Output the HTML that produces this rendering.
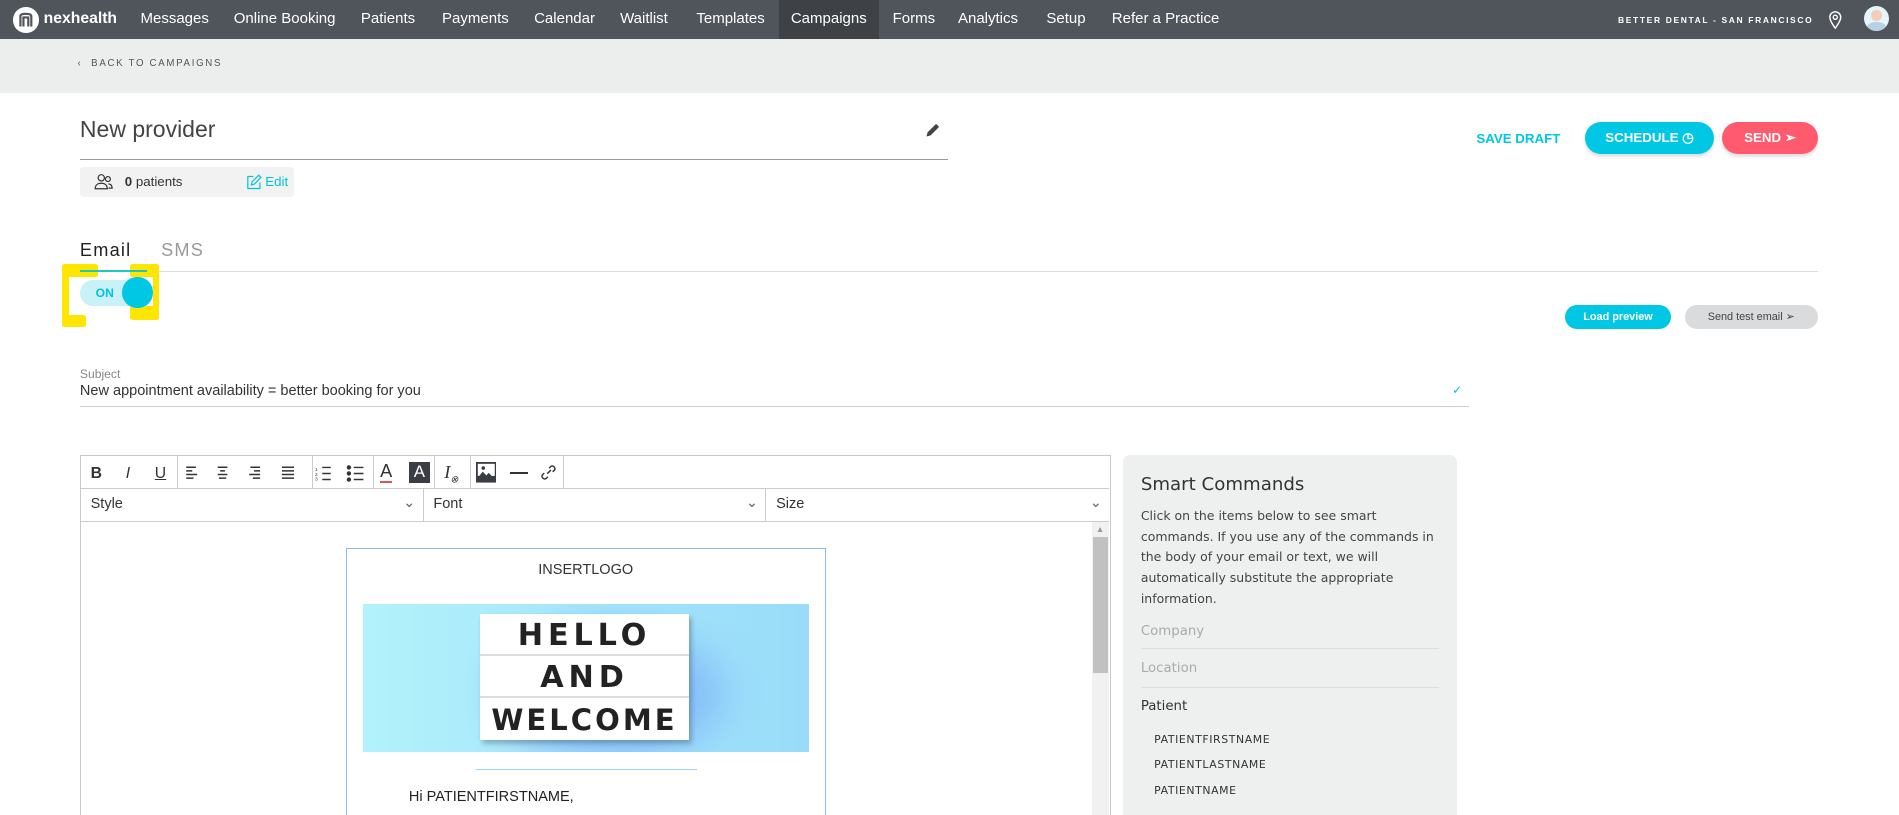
<!DOCTYPE html>
<html><head><meta charset="utf-8">
<style>
*{box-sizing:border-box;margin:0;padding:0}
html,body{width:1899px;height:815px;overflow:hidden;background:#fff}
body{zoom:1.2111;width:1568px;height:673px;position:relative;font-family:"Liberation Sans",sans-serif;color:#333}
.abs{position:absolute}
.nav{left:0;top:0;width:1568px;height:32px;background:#50545b;color:#fff}
.nav span{position:absolute;top:8px;font-size:12.4px;white-space:nowrap}
.band{left:0;top:32px;width:1568px;height:45px;background:#eceeed}
.btn{border-radius:14px;color:#fff;font-weight:bold;font-size:11px;text-align:center}
.tb{position:absolute;top:0;height:27px;border-right:1px solid #ccc}
.ic{position:absolute;top:7px;font-size:13px;color:#333}
.y{position:absolute;background:#ffe600;border-radius:2px}
</style></head><body>
<div class="abs nav">
  <div class="abs" style="left:11px;top:6px;width:21px;height:21px;border-radius:50%;background:#fff"></div>
  <svg class="abs" style="left:15px;top:10px" width="13" height="13" viewBox="0 0 13 13"><path d="M2 12V3.5Q2 1.5 6.5 1.5T11 3.5V12M4.5 12V4.5h4V12" fill="none" stroke="#50545b" stroke-width="1.8"/></svg>
  <span style="left:36px;font-weight:bold;font-size:13px">nexhealth</span>
  <span style="left:116px">Messages</span>
  <span style="left:193px">Online Booking</span>
  <span style="left:298px">Patients</span>
  <span style="left:365px">Payments</span>
  <span style="left:441px">Calendar</span>
  <span style="left:512px">Waitlist</span>
  <span style="left:575px">Templates</span>
  <div class="abs" style="left:643px;top:0;width:83px;height:32px;background:#3e4247"></div>
  <span style="left:653px">Campaigns</span>
  <span style="left:737px">Forms</span>
  <span style="left:791px">Analytics</span>
  <span style="left:864px">Setup</span>
  <span style="left:918px">Refer a Practice</span>
  <span style="left:1336px;top:12px;font-size:7px;font-weight:bold;letter-spacing:1.35px">BETTER DENTAL - SAN FRANCISCO</span>
  <svg class="abs" style="left:1509px;top:8px" width="12" height="16" viewBox="0 0 12 16"><path d="M6 15C3 11 1.5 8.5 1.5 6a4.5 4.5 0 0 1 9 0c0 2.5-1.5 5-4.5 9z" fill="none" stroke="#fff" stroke-width="1.2"/><circle cx="6" cy="6" r="1.7" fill="none" stroke="#fff" stroke-width="1.1"/></svg>
  <div class="abs" style="left:1539px;top:5px;width:21px;height:21px;border-radius:50%;background:#e6f4fb;overflow:hidden">
    <div class="abs" style="left:6px;top:3px;width:9px;height:9px;border-radius:50%;background:#f3cdb5"></div>
    <div class="abs" style="left:2px;top:13px;width:17px;height:12px;border-radius:50%;background:#b9cfe3"></div>
  </div>
</div>
<div class="abs band">
  <span class="abs" style="left:64px;top:16px;font-size:8px;letter-spacing:1.4px;color:#555">‹&nbsp;&nbsp;BACK TO CAMPAIGNS</span>
</div>
<div class="abs" style="left:66px;top:96px;font-size:19px;color:#444;font-weight:300">New provider</div>
<svg class="abs" style="left:763px;top:101px" width="14" height="14" viewBox="0 0 14 14"><path d="M2 12l1-3.5 7-7 2.5 2.5-7 7z" fill="#444"/></svg>
<div class="abs" style="left:66px;top:131px;width:717px;height:1px;background:#999"></div>
<div class="abs" style="left:66px;top:138px;width:177px;height:25px;background:#f2f2f2;border-radius:3px">
  <svg class="abs" style="left:12px;top:5px" width="16" height="15" viewBox="0 0 16 15"><circle cx="6" cy="4" r="2.6" fill="none" stroke="#333" stroke-width="1"/><path d="M1 13c0-3 2-4.5 5-4.5s5 1.5 5 4.5z" fill="none" stroke="#333" stroke-width="1"/><circle cx="11.5" cy="5" r="2" fill="none" stroke="#333" stroke-width="1"/><path d="M12 9c2 .3 3 1.5 3 3.5h-3" fill="none" stroke="#333" stroke-width="1"/></svg>
  <span class="abs" style="left:37px;top:6px;font-size:11px"><b>0</b> patients</span>
  <svg class="abs" style="left:137px;top:6px" width="13" height="13" viewBox="0 0 13 13"><path d="M6 2H1.5v10h10V7M4.5 9l.5-2.5L10.5 1l1.8 1.8L7 8.3z" fill="none" stroke="#00c2e0" stroke-width="1"/></svg>
  <span class="abs" style="left:153px;top:6px;font-size:11px;color:#00c2e0">Edit</span>
</div>
<span class="abs" style="left:1219px;top:108px;font-size:11px;font-weight:bold;color:#00c8e4">SAVE DRAFT</span>
<div class="abs btn" style="left:1309px;top:101px;width:106px;height:26px;background:#00c8e4;line-height:26px;box-shadow:0 2px 3px rgba(0,0,0,.15)">SCHEDULE ◷</div>
<div class="abs btn" style="left:1422px;top:101px;width:79px;height:26px;background:#ff5a6e;line-height:26px;box-shadow:0 2px 3px rgba(0,0,0,.15)">SEND ➢</div>

<span class="abs" style="left:66px;top:198px;font-size:15px;letter-spacing:1px;color:#222">Email</span>
<span class="abs" style="left:133px;top:198px;font-size:15px;letter-spacing:1px;color:#999">SMS</span>
<div class="abs" style="left:66px;top:224px;width:1435px;height:1px;background:#ddd"></div>
<!-- yellow brackets -->
<div class="y" style="left:54px;top:218px;width:27px;height:11px"></div>
<div class="y" style="left:51px;top:218px;width:6px;height:52px"></div>
<div class="y" style="left:51px;top:260px;width:20px;height:10px"></div>
<div class="y" style="left:107px;top:218px;width:24px;height:11px"></div>
<div class="y" style="left:126px;top:218px;width:5px;height:46px"></div>
<div class="y" style="left:107px;top:253px;width:24px;height:11px"></div>
<div class="abs" style="left:57px;top:229px;width:69px;height:24px;background:#fff;border-radius:3px"></div>
<div class="abs" style="left:66px;top:223px;width:55px;height:2px;background:#1cc9c0"></div>
<div class="abs" style="left:66px;top:231px;width:59px;height:22px;border-radius:11px;background:#c9f1f8"></div>
<span class="abs" style="left:79px;top:236px;font-size:10px;color:#00c2e0;font-weight:bold">ON</span>
<div class="abs" style="left:101px;top:229px;width:25px;height:25px;border-radius:50%;background:#00c8e4"></div>

<div class="abs btn" style="left:1292px;top:252px;width:88px;height:20px;background:#00c8e4;line-height:20px;font-size:9px">Load preview</div>
<div class="abs btn" style="left:1391px;top:252px;width:110px;height:20px;background:#dadbdd;color:#444;line-height:20px;font-size:9px;font-weight:normal">Send test email ➢</div>

<span class="abs" style="left:66px;top:303px;font-size:10px;color:#888">Subject</span>
<span class="abs" style="left:66px;top:316px;font-size:12px;color:#333">New appointment availability = better booking for you</span>
<span class="abs" style="left:1199px;top:316px;font-size:10px;color:#00c2e0">✓</span>
<div class="abs" style="left:66px;top:335px;width:1147px;height:1px;background:#ccc"></div>

<div class="abs" style="left:66px;top:376px;width:851px;height:300px;border:1px solid #c9c9c9">
  <div class="abs" style="left:0;top:0;width:849px;height:27px;border-bottom:1px solid #ccc">
    <div class="tb" style="left:0;width:80px"></div>
    <div class="tb" style="left:80px;width:112px"></div>
    <div class="tb" style="left:192px;width:50px"></div>
    <div class="tb" style="left:242px;width:50px"></div>
    <div class="tb" style="left:292px;width:30px"></div>
    <div class="tb" style="left:322px;width:77px"></div>
    <span class="ic" style="left:8px;font-weight:bold">B</span>
    <span class="ic" style="left:37px;font-style:italic">I</span>
    <span class="ic" style="left:61px;text-decoration:underline">U</span>
    <svg class="abs" style="left:86px;top:8px" width="110" height="12" viewBox="0 0 110 12" stroke="#333" stroke-width="1.2"><path d="M1 1h8M1 4h5M1 7h9M1 10h6M27 1h8M29 4h4M27 7h8M28 10h6M54 1h8M57 4h5M53 7h9M56 10h6M80 1h10M80 4h10M80 7h10M80 10h10"/></svg>
    <svg class="abs" style="left:193px;top:7px" width="45" height="14" viewBox="0 0 45 14" stroke="#333" stroke-width="1.2"><path d="M6 2h7M6 7h7M6 12h7M32 2h8M32 7h8M32 12h8"/><text x="0" y="5" font-size="4" fill="#333" stroke="none">1</text><text x="0" y="9" font-size="4" fill="#333" stroke="none">2</text><text x="0" y="13" font-size="4" fill="#333" stroke="none">3</text><circle cx="28" cy="2" r="1.2" fill="#333"/><circle cx="28" cy="7" r="1.2" fill="#333"/><circle cx="28" cy="12" r="1.2" fill="#333"/></svg>
    <span class="ic" style="left:247px;top:5px;font-size:15px;border-bottom:2px solid #e05060;line-height:15px">A</span>
    <span class="abs" style="left:271px;top:5px;width:17px;height:17px;background:#3a3e44;color:#fff;font-size:14px;text-align:center;line-height:17px">A</span>
    <span class="ic" style="left:300px;font-style:italic;font-family:'Liberation Serif',serif;font-size:15px;top:5px">I<sub style="font-size:8px">⊗</sub></span>
    <svg class="abs" style="left:326px;top:5px" width="17" height="17" viewBox="0 0 17 17"><rect width="17" height="17" fill="#3a3e44"/><rect x="1.5" y="1.5" width="14" height="10" fill="#fff"/><path d="M1.5 13l4-5 3 3 2-2 5 5z" fill="#3a3e44"/><circle cx="6" cy="5" r="1.5" fill="#3a3e44"/></svg>
    <div class="abs" style="left:354px;top:13px;width:15px;height:1.5px;background:#333"></div>
    <svg class="abs" style="left:379px;top:6px" width="14" height="14" viewBox="0 0 14 14" fill="none" stroke="#333" stroke-width="1.2"><path d="M6 8l3-3M7.5 3.5l1.5-1.5a2.2 2.2 0 0 1 3 3L10.5 6.5M6.5 10.5L5 12a2.2 2.2 0 0 1-3-3l1.5-1.5"/></svg>
  </div>
  <div class="abs" style="left:0;top:27px;width:849px;height:27px;border-bottom:1px solid #ccc;font-size:12px">
    <div class="abs" style="left:0;top:0;width:283px;height:26px;border-right:1px solid #ccc"></div>
    <div class="abs" style="left:283px;top:0;width:283px;height:26px;border-right:1px solid #ccc"></div>
    <span class="abs" style="left:8px;top:6px">Style</span><span class="abs" style="left:266px;top:5px;color:#666">⌄</span>
    <span class="abs" style="left:291px;top:6px">Font</span><span class="abs" style="left:549px;top:5px;color:#666">⌄</span>
    <span class="abs" style="left:574px;top:6px">Size</span><span class="abs" style="left:833px;top:5px;color:#666">⌄</span>
  </div>
  <div class="abs" style="left:835px;top:54px;width:14px;height:250px;background:#f1f1f1">
    <span class="abs" style="left:3px;top:2px;font-size:7px;color:#999">▲</span>
    <div class="abs" style="left:1px;top:13px;width:12px;height:112px;background:#c1c1c1"></div>
  </div>
  <div class="abs" style="left:219px;top:76px;width:396px;height:230px;border:1px solid #8ab8f0">
    <span class="abs" style="left:0;width:394px;text-align:center;top:10px;font-size:12px;color:#333">INSERTLOGO</span>
    <div class="abs" style="left:13px;top:45px;width:368px;height:122px;background:linear-gradient(90deg,#b2f2fb,#a6e6fb 50%,#98dcfa);overflow:hidden">
      <div class="abs" style="left:110px;top:20px;width:190px;height:110px;border-radius:50%;background:#7fb4f7;filter:blur(16px);opacity:.75"></div>
      <div class="abs" style="left:97px;top:8px;width:172px;height:104px;background:#fff;box-shadow:2px 3px 4px rgba(0,0,0,.25)"></div>
      <div class="abs" style="left:97px;top:8px;width:172px;height:104px;font-family:'DejaVu Sans',sans-serif;font-weight:bold;color:#222;text-align:center;letter-spacing:4px">
        <div style="height:35px;line-height:37px;font-size:25px;border-bottom:2px solid #ddd">HELLO</div>
        <div style="height:35px;line-height:37px;font-size:25px;border-bottom:2px solid #ddd">AND</div>
        <div style="height:34px;line-height:37px;font-size:24px;letter-spacing:2.5px">WELCOME</div>
      </div>
    </div>
    <div class="abs" style="left:106px;top:181px;width:183px;height:1px;background:#9fd4f0"></div>
    <span class="abs" style="left:51px;top:198px;font-size:12px;color:#222">Hi PATIENTFIRSTNAME,</span>
  </div>
</div>

<div class="abs" style="left:927px;top:376px;width:276px;height:310px;background:#eeefef;border-radius:6px;font-family:'DejaVu Sans',sans-serif">
  <span class="abs" style="left:15px;top:15px;font-size:15px;color:#333">Smart Commands</span>
  <div class="abs" style="left:15px;top:42px;width:255px;font-size:10.3px;line-height:17px;color:#444">Click on the items below to see smart commands. If you use any of the commands in the body of your email or text, we will automatically substitute the appropriate information.</div>
  <span class="abs" style="left:15px;top:139px;font-size:11px;color:#aaa">Company</span>
  <div class="abs" style="left:15px;top:159px;width:246px;height:1px;background:#ddd"></div>
  <span class="abs" style="left:15px;top:170px;font-size:11px;color:#aaa">Location</span>
  <div class="abs" style="left:15px;top:191px;width:246px;height:1px;background:#ddd"></div>
  <span class="abs" style="left:15px;top:201px;font-size:11px;color:#333">Patient</span>
  <span class="abs" style="left:26px;top:229px;font-size:9px;color:#333;letter-spacing:.5px">PATIENTFIRSTNAME</span>
  <span class="abs" style="left:26px;top:250px;font-size:9px;color:#333;letter-spacing:.5px">PATIENTLASTNAME</span>
  <span class="abs" style="left:26px;top:271px;font-size:9px;color:#333;letter-spacing:.5px">PATIENTNAME</span>
</div>
</body></html>
